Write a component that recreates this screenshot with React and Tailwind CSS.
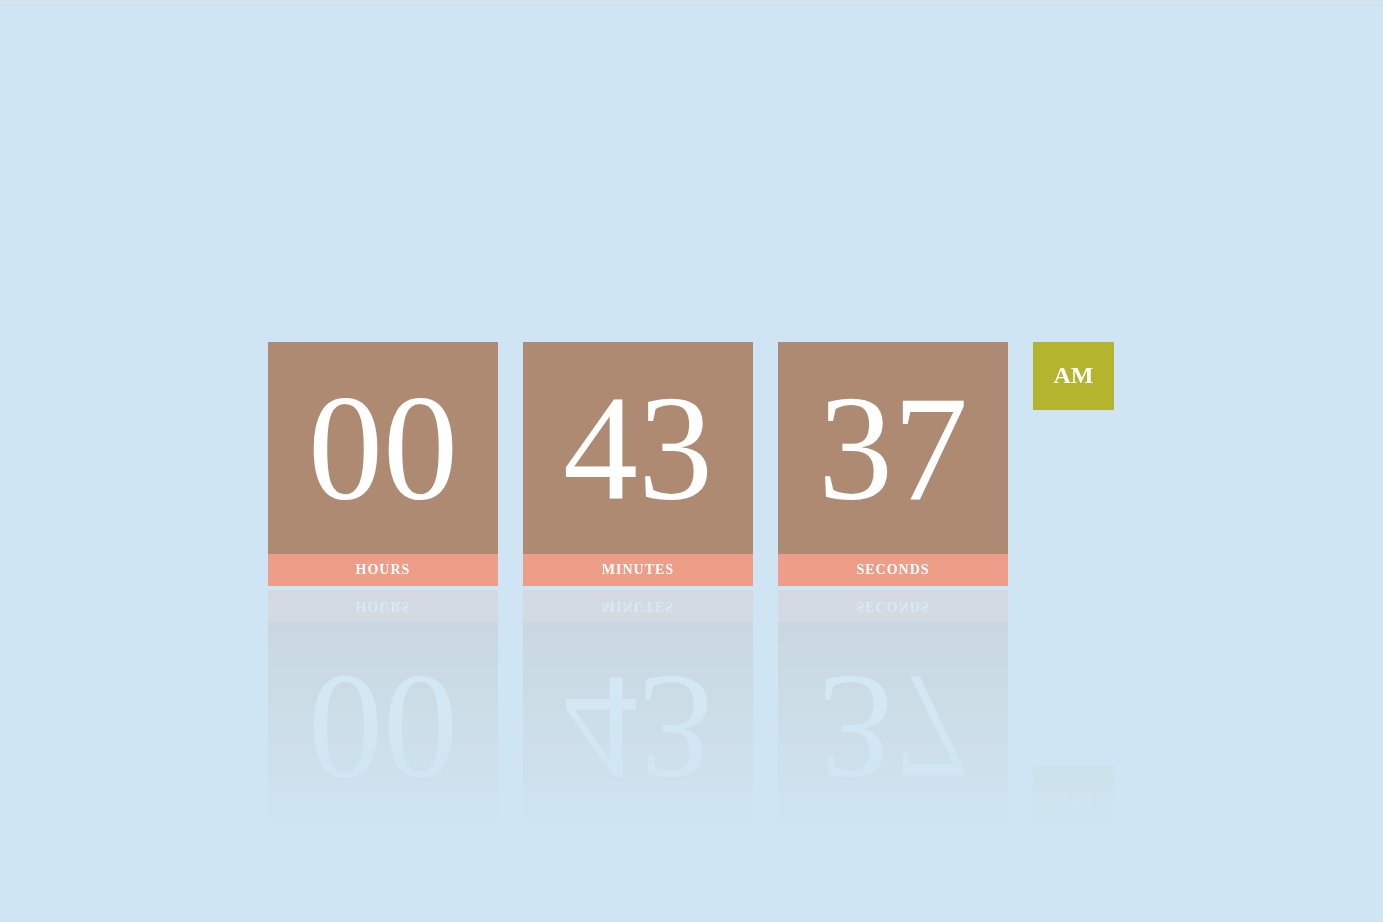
import React from 'react';

const units = [
    { value: '00', label: 'Hours' },
    { value: '43', label: 'Minutes' },
    { value: '37', label: 'Seconds' },
];

const App = () => {
    return (
        <div className="min-h-screen bg-[#cfe5f3] border-t border-[#dcdcdc] pt-[341px] font-['Liberation_Serif','Times_New_Roman',serif]">
            <div className="flex justify-center pr-px">
                <div className="flex items-start gap-[25px] [-webkit-box-reflect:below_4px_linear-gradient(transparent,rgba(255,255,255,0.17))]">
                    {units.map(u => (
                        <div key={u.label} className="w-[230px]">
                            <div className="h-[212px] bg-[#ad8a71] flex items-center justify-center text-white text-[150px] leading-none">
                                {u.value}
                            </div>
                            <div className="h-[32px] pb-[2px] bg-[#ee9e88] flex items-center justify-center text-white text-[14px] font-bold uppercase tracking-[1px]">
                                {u.label}
                            </div>
                        </div>
                    ))}
                    <div className="w-[81px] h-[68px] pb-[2px] bg-[#b5b42e] flex items-center justify-center text-white text-[24px] font-bold">
                        AM
                    </div>
                </div>
            </div>
        </div>
    );
};

export default App;
